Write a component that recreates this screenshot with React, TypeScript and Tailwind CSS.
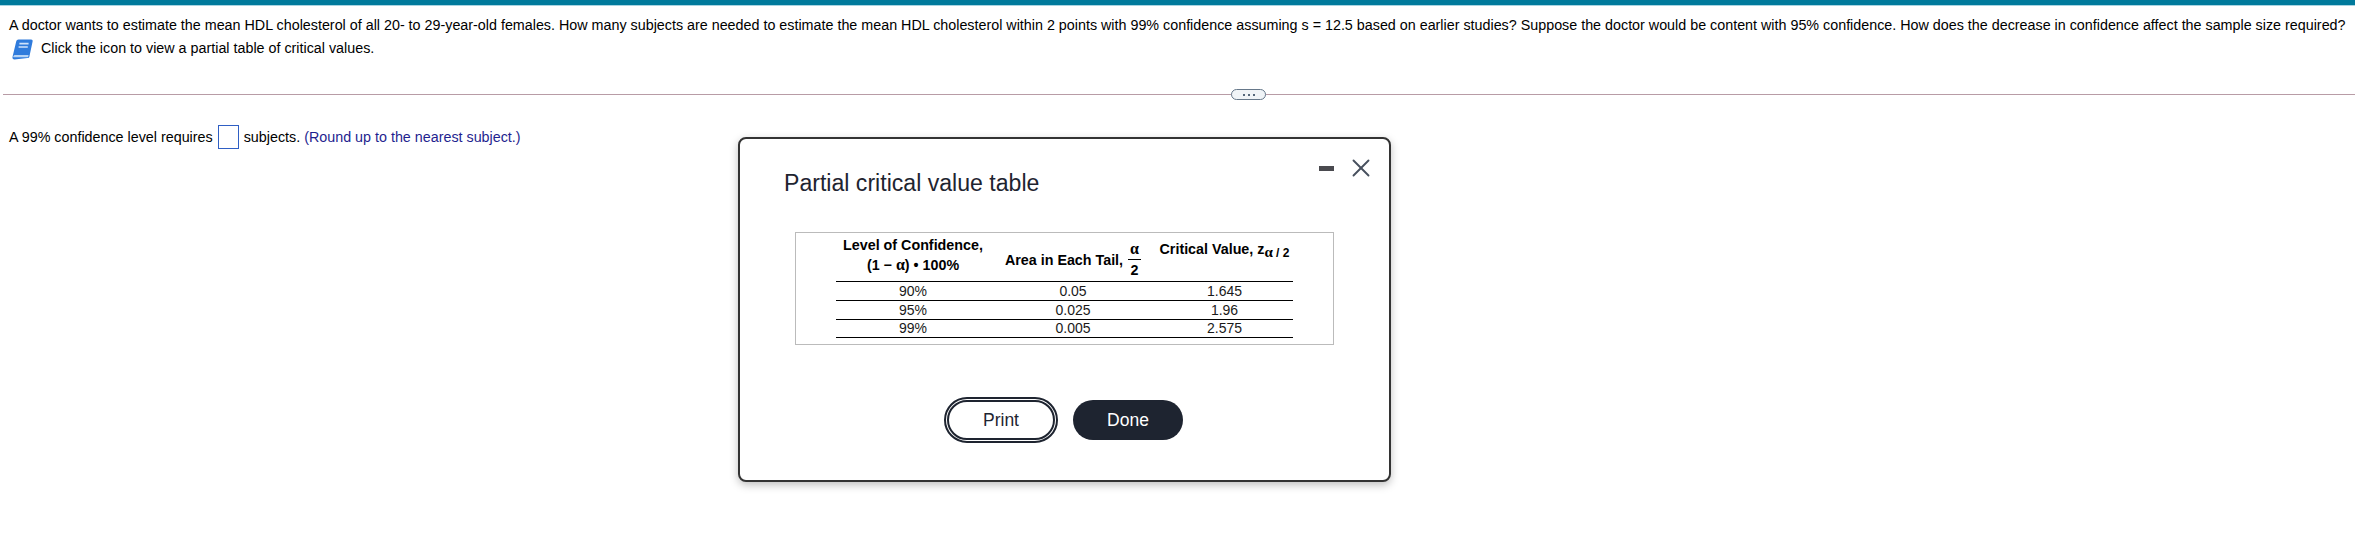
import React from 'react';
import { X } from 'lucide-react';

const rows = [
  ['90%', '0.05', '1.645', 'h-[19px]'],
  ['95%', '0.025', '1.96', 'h-[19px]'],
  ['99%', '0.005', '2.575', 'h-[18px]'],
];

const Alpha = ({ className = '' }: { className?: string }) => (
  <span className={`font-['Liberation_Serif',serif] font-bold ${className}`}>α</span>
);

const BookIcon = () => (
  <svg width="21" height="21" viewBox="0 0 21 21" className="shrink-0">
    <path d="M6.5.6h12.6c1.2 0 1.8.8 1.5 1.9L17.4 17.6c-.2 1-.9 1.5-1.9 1.5l-13 1.3C1 20.4.2 19.4.5 18L4.2 2.6C4.5 1.3 5.3.6 6.5.6z" fill="#2f7bdc" />
    <path d="M1.2 17.8c.3-1.2 1-1.7 2.2-1.7h13.2l-.5 2.2H2.6c-.8 0-1.5-.1-1.4-.5z" fill="#b5d3f5" />
    <path d="M7.4 4.6h9.2M6.6 8h9.2" stroke="#cfe2fa" strokeWidth="1.7" />
  </svg>
);

export default function App() {
  return (
    <div className="relative h-[540px] w-[2355px] overflow-hidden bg-white font-['Liberation_Sans',Arial,sans-serif] text-[14.32px] text-black">
      <div className="h-[6px] border-b border-[#a8d4e2] bg-[#007a9c]" />

      <div className="px-[9px] pt-[11px]">
        <p className="h-[17px] leading-[17px] whitespace-nowrap">
          A doctor wants to estimate the mean HDL cholesterol of all 20- to 29-year-old females. How many subjects are needed to estimate the mean HDL cholesterol within 2 points with 99% confidence assuming s = 12.5 based on earlier studies? Suppose the doctor would be content with 95% confidence. How does the decrease in confidence affect the sample size required?
        </p>
        <div className="mt-[3px] flex h-[24px] items-center gap-[8px] pl-[3px]">
          <BookIcon />
          <span>Click the icon to view a partial table of critical values.</span>
        </div>
      </div>

      <div className="relative mt-[33px] ml-[3px] h-px bg-[#b89ca6]">
        <div className="absolute top-[-5px] left-[1228px] flex h-[11px] w-[35px] items-center justify-center gap-[3px] rounded-full border border-[#66788a] bg-[#f0f4f7]">
          <span className="h-[2px] w-[2px] bg-[#55677a]" />
          <span className="h-[2px] w-[2px] bg-[#55677a]" />
          <span className="h-[2px] w-[2px] bg-[#55677a]" />
        </div>
      </div>

      <div className="mt-[30px] flex items-center pl-[9px]">
        <span className="pt-[1px]">A 99% confidence level requires</span>
        <span className="mx-[5px] h-[24px] w-[21px] border border-[#2f5fc4] bg-white" />
        <span className="pt-[1px]">subjects.</span>
        <span className="ml-[4px] pt-[1px] text-[#1f1f8f]">(Round up to the nearest subject.)</span>
      </div>

      <div className="absolute top-[137px] left-[738px] h-[345px] w-[653px] rounded-[8px] border-2 border-[#333333] bg-white shadow-[0_3px_8px_rgba(0,0,0,0.25)]">
        <div className="absolute top-[14px] right-[13px] flex items-center gap-[12px]">
          <span className="h-[5px] w-[15px] bg-[#4a4a4f]" />
          <X size={30} strokeWidth={1.5} className="text-[#47505e]" />
        </div>

        <h1 className="pt-[30px] pl-[44px] text-[23.1px] leading-[28px] font-normal text-[#1e2430]">Partial critical value table</h1>

        <div className="mt-[35px] ml-[55px] h-[113px] w-[539px] border border-[#bbbbbb] px-[40px] pt-[3px]">
          <table className="w-[457px] table-fixed border-collapse text-[14px] leading-[17px] text-[#1a1a1a]">
            <colgroup>
              <col className="w-[154px]" />
              <col className="w-[166px]" />
              <col className="w-[137px]" />
            </colgroup>
            <thead>
              <tr className="h-[45px] border-b border-black text-[14.3px] leading-[19px] font-bold text-black">
                <th className="pb-[6px] align-middle font-bold whitespace-nowrap">
                  Level of Confidence,
                  <br />
                  (1 − <Alpha className="text-[16px]" />) • 100%
                </th>
                <th className="pt-[2px] text-center font-bold whitespace-nowrap">
                  <span className="inline-flex items-center">
                    <span className="pt-[1px]">Area in Each Tail,</span>
                    <span className="ml-[5px] inline-flex flex-col items-center leading-[20px]">
                      <Alpha className="text-[16px]" />
                      <span className="w-[13px] border-t border-black text-center">2</span>
                    </span>
                  </span>
                </th>
                <th className="pb-[18px] align-middle font-bold whitespace-nowrap">
                  Critical Value, z
                  <sub className="text-[12px]">
                    <Alpha className="text-[15px]" /> / 2
                  </sub>
                </th>
              </tr>
            </thead>
            <tbody>
              {rows.map((row) => (
                <tr key={row[0]} className={`${row[3]} border-b border-black text-center`}>
                  {row.slice(0, 3).map((cell) => (
                    <td key={cell} className="p-0">{cell}</td>
                  ))}
                </tr>
              ))}
            </tbody>
          </table>
        </div>

        <div className="mt-[55px] ml-[204px] flex items-center gap-[15px] text-[17.5px]">
          <button className="ml-[3px] h-[40px] w-[108px] rounded-full border-2 border-[#1e2430] bg-white text-[#1e2430] outline-2 outline-offset-[1px] outline-[#1e2430]">
            Print
          </button>
          <button className="ml-[3px] h-[40px] w-[110px] rounded-full bg-[#1e2430] text-white">Done</button>
        </div>
      </div>
    </div>
  );
}
